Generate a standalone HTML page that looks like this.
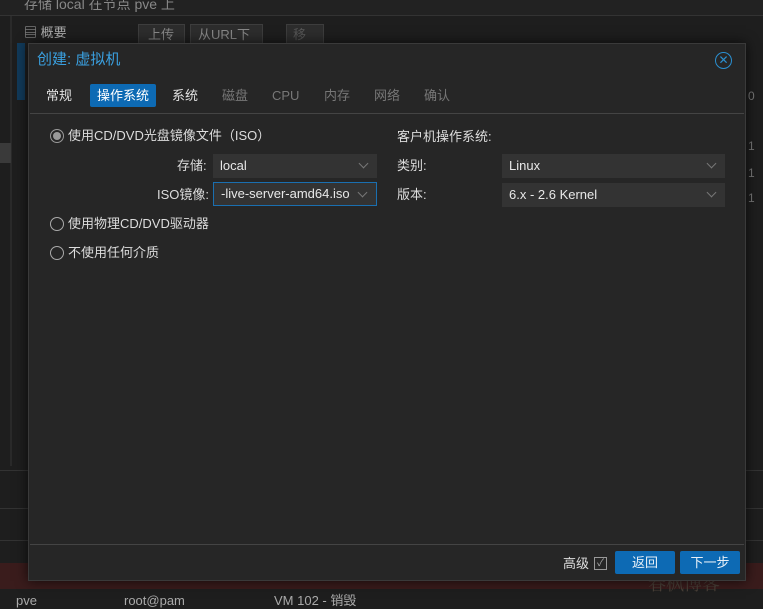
<!DOCTYPE html><html><head><meta charset="utf-8"><style>
*{box-sizing:border-box;margin:0;padding:0}
body{width:763px;height:606px;overflow:hidden;background:#1e1e1e;font-family:"Liberation Sans","Noto Sans CJK SC",sans-serif;font-size:13px;line-height:16px;color:#ddd;position:relative}
.a{position:absolute}
.dlg{left:28px;top:43px;width:718px;height:538px;background:#262626;border:1px solid #3a3a3a;box-shadow:0 0 12px rgba(0,0,0,.7)}
.sel{background:#333;height:24px;color:#e8e8e8;padding:4px 7px;font-size:13px}
.sel:after{content:"";position:absolute;right:10px;top:6px;width:6px;height:6px;border-right:1px solid #777;border-bottom:1px solid #777;transform:rotate(45deg)}
.rad{width:14px;height:14px;border:1px solid #aaa;border-radius:50%;background:#262626}
.btn{background:#0d6ab4;color:#e8f0f8;height:23px;border-radius:2px;text-align:center;line-height:23px}
</style></head><body>
<div class="a" style="left:0;top:0;width:763px;height:16px;background:#222;border-bottom:1px solid #333"></div>
<div class="a" style="left:24px;top:-4px;color:#888;font-size:14px">存储 local 在节点 pve 上</div>
<div class="a" style="left:10px;top:16px;width:2px;height:450px;background:#2a2a2a"></div>
<div class="a" style="left:17px;top:43px;width:8px;height:57px;background:#113a5a"></div>
<div class="a" style="left:0;top:143px;width:11px;height:20px;background:#3a3a3a"></div>
<div class="a" style="left:24px;top:25px;color:#aaa">▤ 概要</div>
<div class="a" style="left:138px;top:24px;width:47px;height:21px;border:1px solid #3d3d3d;background:#2d2d2d;color:#888;padding:2px 9px">上传</div>
<div class="a" style="left:190px;top:24px;width:73px;height:21px;border:1px solid #3d3d3d;background:#2d2d2d;color:#888;padding:2px 7px">从URL下载</div>
<div class="a" style="left:286px;top:24px;width:38px;height:21px;border:1px solid #3d3d3d;background:#2d2d2d;color:#555;padding:2px 6px">移除</div>
<div class="a" style="left:0;top:470px;width:763px;height:1px;background:#333"></div>
<div class="a" style="left:0;top:508px;width:763px;height:1px;background:#333"></div>
<div class="a" style="left:0;top:540px;width:763px;height:1px;background:#333"></div>
<div class="a" style="left:0;top:563px;width:763px;height:26px;background:#3a1c1c"></div>
<div class="a" style="left:16px;top:593px;color:#aaa">pve</div>
<div class="a" style="left:124px;top:593px;color:#aaa">root@pam</div>
<div class="a" style="left:274px;top:593px;color:#aaa">VM 102 - 销毁</div>
<div class="a" style="left:748px;top:88px;color:#777;font-size:12px">0</div>
<div class="a" style="left:748px;top:138px;color:#777;font-size:12px">1</div>
<div class="a" style="left:748px;top:165px;color:#777;font-size:12px">1</div>
<div class="a" style="left:748px;top:190px;color:#777;font-size:12px">1</div>
<div class="a" style="left:648px;top:572px;color:#4a4038;font-size:18px;line-height:22px;font-family:'Noto Serif CJK SC',serif">春枫博客</div>
<div class="a dlg">
<div class="a" style="left:8px;top:7px;color:#3aa0e0;font-size:15px;line-height:18px">创建: 虚拟机</div>
<div class="a" style="left:686px;top:8px;width:17px;height:17px;border:1px solid #2a8fd0;border-radius:50%;color:#2a8fd0;font-size:12px;text-align:center;line-height:15px">✕</div>
<div class="a" style="left:17px;top:44px;color:#e0e0e0">常规</div>
<div class="a" style="left:61px;top:40px;width:66px;height:23px;background:#0d6ab4;border-radius:2px;color:#fff;text-align:center;line-height:23px">操作系统</div>
<div class="a" style="left:143px;top:44px;color:#e0e0e0">系统</div>
<div class="a" style="left:193px;top:44px;color:#777">磁盘</div>
<div class="a" style="left:243px;top:44px;color:#777">CPU</div>
<div class="a" style="left:295px;top:44px;color:#777">内存</div>
<div class="a" style="left:345px;top:44px;color:#777">网络</div>
<div class="a" style="left:395px;top:44px;color:#777">确认</div>
<div class="a" style="left:1px;top:69px;width:714px;height:432px;border-top:1px solid #444;border-bottom:1px solid #444"></div>
<div class="a rad" style="left:21px;top:85px;border-color:#999"><div class="a" style="left:2px;top:2px;width:8px;height:8px;border-radius:50%;background:#999"></div></div>
<div class="a" style="left:39px;top:84px">使用CD/DVD光盘镜像文件（ISO）</div>
<div class="a" style="left:148px;top:114px">存储:</div>
<div class="a sel" style="left:184px;top:110px;width:164px">local</div>
<div class="a" style="left:128px;top:143px">ISO镜像:</div>
<div class="a sel" style="left:184px;top:138px;width:164px;border:1px solid #1a6fb0;padding-top:3px">-live-server-amd64.iso</div>
<div class="a rad" style="left:21px;top:173px"></div>
<div class="a" style="left:39px;top:172px">使用物理CD/DVD驱动器</div>
<div class="a rad" style="left:21px;top:202px"></div>
<div class="a" style="left:39px;top:201px">不使用任何介质</div>
<div class="a" style="left:368px;top:85px">客户机操作系统:</div>
<div class="a" style="left:368px;top:114px">类别:</div>
<div class="a sel" style="left:473px;top:110px;width:223px">Linux</div>
<div class="a" style="left:368px;top:143px">版本:</div>
<div class="a sel" style="left:473px;top:139px;width:223px">6.x - 2.6 Kernel</div>
<div class="a" style="left:534px;top:512px">高级</div>
<div class="a" style="left:565px;top:513px;width:13px;height:13px;border:1px solid #999;color:#aaa;font-size:10px;line-height:11px;text-align:center">✓</div>
<div class="a btn" style="left:586px;top:507px;width:60px">返回</div>
<div class="a btn" style="left:651px;top:507px;width:60px">下一步</div>
</div>
</body></html>
